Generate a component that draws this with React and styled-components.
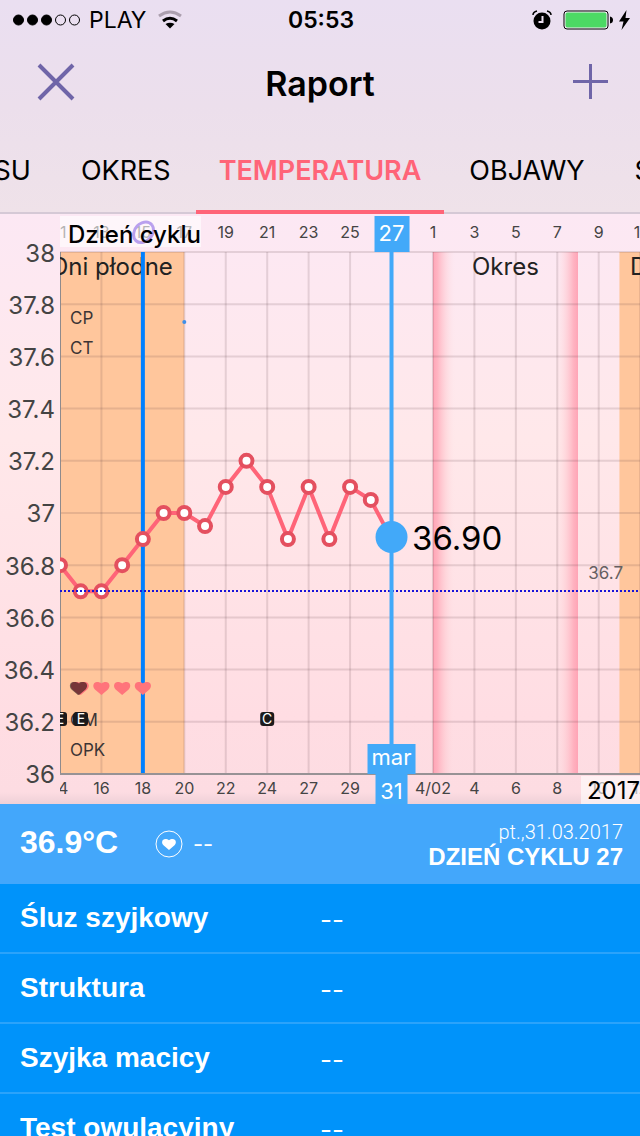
import React from 'react';
import styled, { createGlobalStyle, css } from 'styled-components';

const GlobalStyle = createGlobalStyle`
  :root {
    --ink: #000;
    --accent: #ff6478;
    --icon: #6f65a8;
    --summary-bg: #43a7fb;
    --list-bg: #0093fa;
  }
  * {
    box-sizing: border-box;
  }
  body {
    margin: 0;
    font-family: Inter, 'Liberation Sans', sans-serif;
    color: var(--ink);
  }
`;

const Page = styled.div`
  display: flex;
  flex-direction: column;
  height: 100vh;
  overflow: hidden;
`;

const Header = styled.header`
  flex: none;
  background: linear-gradient(#eadff1, #ecdfec 50%, #efe2e9);
  box-shadow: inset 0 -2px 0 #d5c9d6;
`;

const StatusBar = styled.div`
  display: grid;
  grid-template-columns: 1fr auto 1fr;
  align-items: center;
  height: 40px;
  padding: 0 10px 0 12px;
  font-size: 23px;
`;

const StatusGroup = styled.div`
  display: flex;
  align-items: center;
  justify-content: ${props => props.justify || 'flex-start'};
  gap: ${props => props.$gap}px;
`;

const Time = styled.time`
  font-weight: 600;
`;

const TitleBar = styled.div`
  display: grid;
  grid-template-columns: 1fr auto 1fr;
  align-items: center;
  height: 84px;
  padding: 0 30px;
`;

const Title = styled.h1`
  margin: 0;
  font-size: 34px;
  line-height: 40px;
  padding-top: 4px;
  font-weight: 600;
`;

const IconButton = styled.button`
  display: flex;
  justify-self: ${props => props.$side};
  padding: 0;
  border: none;
  background: none;
  color: var(--icon);
`;

const Tabs = styled.nav`
  display: grid;
  grid-template-columns: 1fr auto 1fr;
  height: 90px;
  overflow: hidden;
`;

const TabSide = styled.div`
  display: flex;
  min-width: 0;
  gap: 4px;
  padding: 0 2px;
  justify-content: ${props => props.justify};
`;

const Tab = styled.a`
  flex: none;
  height: 90px;
  padding: 4px 23px 0;
  line-height: 86px;
  font-size: 27px;
  color: var(--ink);
  text-decoration: none;
  ${props =>
    props.$active &&
    css`
      color: var(--accent);
      font-weight: 600;
      box-shadow: inset 0 -4px 0 var(--accent);
    `}
`;

const ChartSection = styled.main`
  flex: none;
  display: flex;
  height: 590px;
  background: linear-gradient(#fce8f4, #ffe8ea 38%, #ffdde3 85%, #fddce2 98%, #eed0d7);
`;

const YAxis = styled.div`
  display: flex;
  flex: none;
  flex-direction: column;
  justify-content: space-between;
  align-items: flex-end;
  width: 60px;
  padding: 26px 5px 15px 0;
  font-size: 24px;
  line-height: 28px;
  color: #444;
`;

const Plot = styled.div`
  position: relative;
  flex: 1;
  min-width: 0;
  overflow: hidden;
`;

const PlotSvg = styled.svg`
  display: block;
  font-family: Inter, 'Liberation Sans', sans-serif;
`;

const AxisCaption = styled.div`
  position: absolute;
  background: rgba(255, 255, 255, 0.6);
  font-size: 24px;
  line-height: 26px;
  ${props =>
    props.$corner === 'top'
      ? css`
          top: 2px;
          left: 0;
          padding: 6px 0 0 8px;
          line-height: 25px;
          font-weight: 500;
        `
      : css`
          right: 0;
          bottom: 0;
          padding: 2px 0 0 6px;
        `}
`;

const CycleRing = styled.svg`
  position: absolute;
  top: 6px;
  left: 71px;
`;

const Summary = styled.section`
  display: flex;
  flex: none;
  align-items: center;
  height: 80px;
  padding: 0 17px 0 20px;
  background: var(--summary-bg);
  color: #fff;
  font-family: 'Liberation Sans', Arial, sans-serif;
`;

const Temperature = styled.strong`
  width: 135px;
  padding-bottom: 4px;
  font-size: 32px;
`;

const Mood = styled.div`
  display: flex;
  flex: 1;
  align-items: center;
  gap: 10px;
`;

const Dashes = styled.span`
  font-family: Inter, sans-serif;
  font-size: ${props => props.$size}px;
  line-height: 30px;
`;

const DayInfo = styled.div`
  padding-top: 3px;
  text-align: right;
`;

const DayDate = styled.span`
  display: block;
  font-family: Roboto, sans-serif;
  font-weight: 300;
  font-size: 20px;
  line-height: 22px;
`;

const DayNumber = styled.strong`
  display: block;
  font-size: 24px;
  line-height: 28px;
`;

const Entries = styled.dl`
  flex: 1;
  min-height: 0;
  margin: 0;
  overflow: hidden;
  background: var(--list-bg);
  color: #fff;
  font-family: 'Liberation Sans', Arial, sans-serif;
`;

const Entry = styled.div`
  display: grid;
  grid-template-columns: 1fr 1fr;
  align-items: center;
  height: 70px;
  border-bottom: 2px solid #2ba3fa;
`;

const EntryName = styled.dt`
  padding-left: 20px;
  font-size: 28px;
  font-weight: bold;
`;

const EntryValue = styled.dd`
  margin: 0;
  padding-top: 4px;
`;

const STEP = 20.72;
const TOP = 38;
const BOTTOM = 560;

const dayX = i => i * STEP;
const tempY = t => TOP + (38 - t) * 261;

const scale = ['38', '37.8', '37.6', '37.4', '37.2', '37', '36.8', '36.6', '36.4', '36.2', '36'];
const temps = [36.8, 36.7, 36.7, 36.8, 36.9, 37, 37, 36.95, 37.1, 37.2, 37.1, 36.9, 37.1, 36.9, 37.1, 37.05, 36.9];
const cycleDays = ['11', '13', '15', '17', '19', '21', '23', '25', '', '1', '3', '5', '7', '9', '11'];
const dates = ['14', '16', '18', '20', '22', '24', '27', '29', '', '4/02', '4', '6', '8', '10', '12'];
const entries = ['Śluz szyjkowy', 'Struktura', 'Szyjka macicy', 'Test owulacyjny'];

const heartPath =
  'M0 7 L-6.500 1.500 C-9.500 -1.500 -8 -6 -4.500 -6 C-2.500 -6 -1 -5.500 0 -4.500 C1 -5.500 2.500 -6 4.500 -6 C8 -6 9.500 -1.500 6.500 1.500 Z';

function Badge({ x, letter }) {
  return (
    <g transform={`translate(${x} 505)`}>
      <rect x="-7" y="-7" width="14" height="14" rx="3" fill="#1c1a1b" />
      <text y="5" fontSize="14" textAnchor="middle" fill="#fff">
        {letter}
      </text>
    </g>
  );
}

function PeriodEdge({ id, flip }) {
  return (
    <linearGradient id={id} x1={flip ? 1 : 0} x2={flip ? 0 : 1}>
      <stop offset="0" stopColor="#ff9db0" stopOpacity="0.9" />
      <stop offset="0.2" stopColor="#ffa6b6" stopOpacity="0.8" />
      <stop offset="0.6" stopColor="#ffc4cc" stopOpacity="0.4" />
      <stop offset="1" stopColor="#ffe0e4" stopOpacity="0" />
    </linearGradient>
  );
}

function TemperatureChart() {
  const cursorX = dayX(16);
  return (
    <PlotSvg width="840" height="590" role="img" aria-label="Temperatura">
      <defs>
        <PeriodEdge id="periodStart" />
        <PeriodEdge id="periodEnd" flip />
      </defs>

      {/* phases */}
      <rect x="0" y={TOP} width={dayX(6)} height={BOTTOM - TOP} fill="#ffc69c" />
      <rect x={dayX(27)} y={TOP} width={dayX(6)} height={BOTTOM - TOP} fill="#ffc69c" />
      <rect x={dayX(18)} y={TOP} width="22" height={BOTTOM - TOP} fill="url(#periodStart)" />
      <rect x={dayX(25) - 22} y={TOP} width="22" height={BOTTOM - TOP} fill="url(#periodEnd)" />

      {/* grid */}
      <g stroke="#503038" strokeOpacity="0.14" strokeWidth="2">
        {scale.slice(0, -1).map(t => (
          <path key={t} d={`M0 ${tempY(Number(t))}H840`} />
        ))}
        {cycleDays.map((d, i) => (
          <path key={i} d={`M${dayX(i * 2)} ${TOP}V${BOTTOM}`} />
        ))}
      </g>
      <path d={`M0.5 ${TOP}V${BOTTOM}`} stroke="#8f8a8c" />
      <path d={`M0 ${BOTTOM}H840`} stroke="#979295" strokeWidth="2" />

      {/* axis labels */}
      <g fontSize="16" textAnchor="middle" fill="#444">
        {cycleDays.map((d, i) => (
          <text key={i} x={dayX(i * 2)} y="24">
            {d}
          </text>
        ))}
        {dates.map((d, i) => (
          <text key={i} x={dayX(i * 2)} y="580">
            {d}
          </text>
        ))}
      </g>
      <g fontSize="24" fill="#222">
        <text x="-9" y="61">Dni płodne</text>
        <text x="412" y="61">Okres</text>
        <text x="570" y="61">Dni płodne</text>
      </g>
      <g fontSize="17" fill="#3c3535">
        <text x="10" y="110">CP</text>
        <text x="10" y="140">CT</text>
        <text x="10" y="512">CM</text>
        <text x="10" y="542">OPK</text>
        <text x="563" y="365" textAnchor="end" fill="#665f62">36.7</text>
      </g>

      <path d={`M${dayX(4)} ${TOP}V${BOTTOM - 1}`} stroke="#0080ff" strokeWidth="4" />
      <circle cx={dayX(6)} cy="108" r="2" fill="#3f8fe8" />

      {/* temperatures */}
      <polyline
        points={temps.map((t, i) => `${dayX(i)},${tempY(t)}`).join(' ')}
        fill="none"
        stroke="#ff6478"
        strokeWidth="4"
      />
      {temps.map((t, i) => (
        <circle key={i} cx={dayX(i)} cy={tempY(t)} r="6" fill="#fff" stroke="#e4505f" strokeWidth="4" />
      ))}
      <path d="M0 377H840" stroke="#1712d8" strokeWidth="2" strokeDasharray="2 2" />

      {/* symptoms */}
      <path d={heartPath} transform="translate(18 474)" fill="#7a5f50" />
      {[1, 2, 3, 4].map(i => (
        <path key={i} d={heartPath} transform={`translate(${dayX(i)} 474)`} fill="#ff747b" />
      ))}
      <path d={heartPath} transform="translate(19 474)" fill="#773638" />
      <Badge x={0} letter="E" />
      <rect x="13" y="498" width="14" height="14" rx="4" fill="#1c1a1b" />
      <Badge x={21} letter="E" />
      <Badge x={dayX(10)} letter="C" />

      {/* selected day */}
      <path d={`M${cursorX} ${TOP}V535`} stroke="#42a9f9" strokeWidth="4" />
      <circle cx={cursorX} cy="323" r="16" fill="#42a9f9" />
      <text x="352" y="336" fontSize="33" fill="#000">36.90</text>
      <g fill="#42a9f9">
        <rect x={cursorX - 17} y="2" width="35" height="36" />
        <rect x={cursorX - 24} y="530" width="48" height="30" />
        <rect x={cursorX - 16} y="559" width="32" height="31" />
      </g>
      <g fill="#fff" fontSize="22" textAnchor="middle">
        <text x={cursorX} y="27">27</text>
        <text x={cursorX} y="551">mar</text>
        <text x={cursorX} y="585">31</text>
      </g>
    </PlotSvg>
  );
}

export default function App() {
  return (
    <Page>
      <GlobalStyle />
      <Header>
        <StatusBar>
          <StatusGroup $gap={8}>
            <svg width="69" height="14" viewBox="0 0 69 14" stroke="#000" aria-hidden="true">
              {[0, 1, 2, 3, 4].map(i => (
                <circle key={i} cx={6.5 + i * 14} cy="7" r="5" fill={i < 3 ? '#000' : 'none'} />
              ))}
            </svg>
            <span>PLAY</span>
            <svg width="32" height="20" viewBox="-4 0 32 20" fill="none" strokeWidth="3" aria-hidden="true">
              <path d="M1 6Q12 -2 23 6" stroke="#ab9fae" />
              <path d="M5 11Q12 5.500 19 11" stroke="#000" />
              <path d="M12 18.500L7.500 14Q12 11.500 16.500 14Z" fill="#000" />
            </svg>
          </StatusGroup>
          <Time>05:53</Time>
          <StatusGroup justify="flex-end" $gap={0}>
            <svg width="86" height="22" viewBox="0 0 86 22" aria-hidden="true">
              <path d="M1 6Q1 3 5 2M15 2Q19 3 19 6" fill="none" stroke="#000" strokeWidth="1.500" />
              <circle cx="10" cy="12" r="8.500" fill="#000" />
              <path d="M10.500 7V13H6.500" fill="none" stroke="#ecdff0" strokeWidth="2" />
              <rect x="32" y="2" width="44" height="18" rx="3" fill="#f4eaf5" stroke="#000" />
              <rect x="33.500" y="3.500" width="41" height="15" rx="2" fill="#4cd964" />
              <path d="M78 7.500Q81 8 81 11T78 14.500Z" />
            </svg>
            <svg width="12" height="20" viewBox="0 0 12 20" aria-hidden="true">
              <path d="M8.500 0L1 11.500H5.500L3.500 20L12 8H7.500Z" />
            </svg>
          </StatusGroup>
        </StatusBar>
        <TitleBar>
          <IconButton type="button" aria-label="Zamknij" $side="start">
            <svg width="52" height="40" viewBox="-6 0 52 40" stroke="currentColor" strokeWidth="4">
              <path d="M3 3L37 37M37 3L3 37" />
            </svg>
          </IconButton>
          <Title>Raport</Title>
          <IconButton type="button" aria-label="Dodaj" $side="end">
            <svg width="40" height="40" viewBox="0 0 40 40" stroke="currentColor" strokeWidth="3">
              <path d="M3 19.500H38M20.500 2V37" />
            </svg>
          </IconButton>
        </TitleBar>
        <Tabs>
          <TabSide justify="flex-end">
            <Tab href="#su">SU</Tab>
            <Tab href="#okres">OKRES</Tab>
          </TabSide>
          <Tab href="#temperatura" $active>
            TEMPERATURA
          </Tab>
          <TabSide justify="flex-start">
            <Tab href="#objawy">OBJAWY</Tab>
            <Tab href="#s">S</Tab>
          </TabSide>
        </Tabs>
      </Header>

      <ChartSection>
        <YAxis>
          {scale.map(t => (
            <span key={t}>{t}</span>
          ))}
        </YAxis>
        <Plot>
          <TemperatureChart />
          {/* sits under the caption, which washes it out */}
          <CycleRing width="26" height="26" viewBox="0 0 26 26" fill="none" stroke="#5012d4" strokeWidth="3" aria-hidden="true">
            <path d="M21 5C16 -1 5 3 3 12C1 20 7 24 13 22C20 20 25 11 21 5" />
          </CycleRing>
          <AxisCaption $corner="top">Dzień cyklu</AxisCaption>
          <AxisCaption $corner="bottom">2017</AxisCaption>
        </Plot>
      </ChartSection>

      <Summary>
        <Temperature>36.9°C</Temperature>
        <Mood>
          <svg width="28" height="28" viewBox="-14 -14 28 28" aria-hidden="true">
            <circle r="13" fill="none" stroke="#fff" />
            <path d={heartPath} fill="#fff" transform="scale(0.85)" />
          </svg>
          <Dashes $size={22}>--</Dashes>
        </Mood>
        <DayInfo>
          <DayDate>pt.,31.03.2017</DayDate>
          <DayNumber>DZIEŃ CYKLU 27</DayNumber>
        </DayInfo>
      </Summary>

      <Entries>
        {entries.map(name => (
          <Entry key={name}>
            <EntryName>{name}</EntryName>
            <EntryValue>
              <Dashes $size={26}>--</Dashes>
            </EntryValue>
          </Entry>
        ))}
      </Entries>
    </Page>
  );
}
